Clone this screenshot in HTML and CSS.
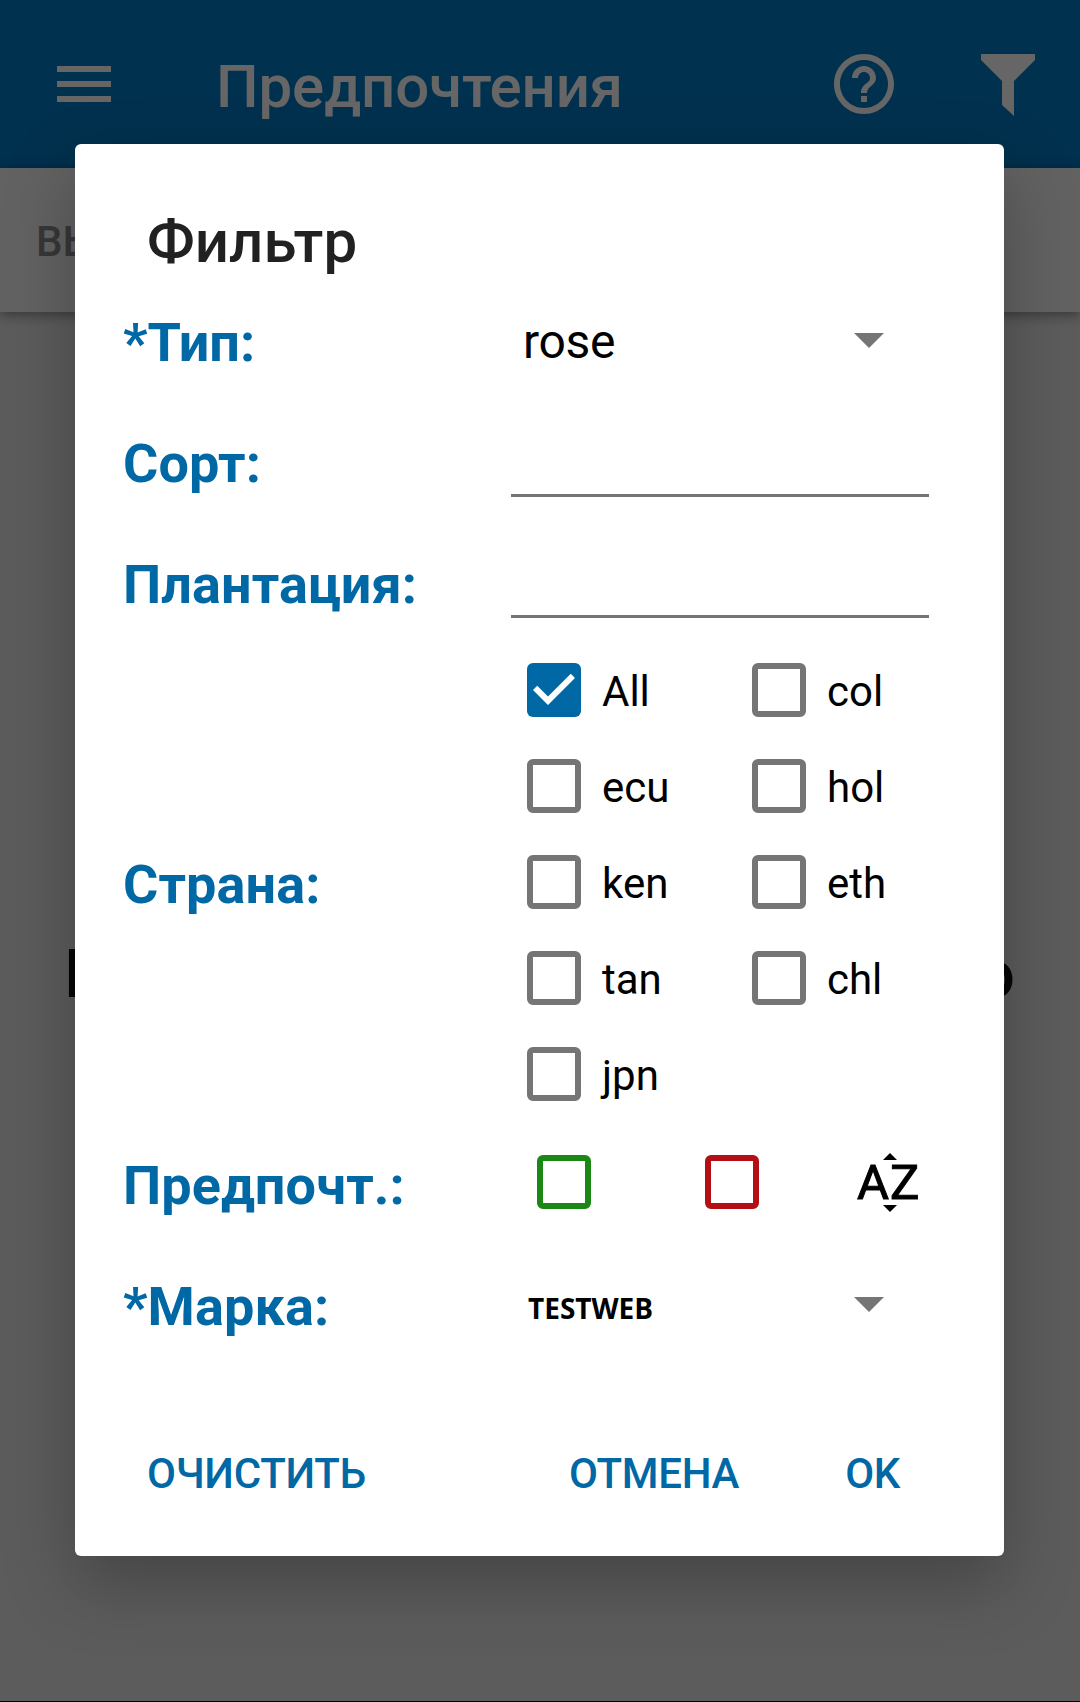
FILE: index.html
```html
<!DOCTYPE html>
<html lang="ru">

<head>
    <meta charset="UTF-8">
    <meta name="viewport" content="width=device-width, initial-scale=1.0">
    <title>Предпочтения</title>
    <link rel="stylesheet" href="styles.css">
</head>

<body>

    <div class="page">
        <header class="header">
            <svg class="menu-icon" viewBox="0 0 24 24"><path d="M3 18h18v-2H3v2zm0-5h18v-2H3v2zm0-7v2h18V6H3z"/></svg>
            <h1>Предпочтения</h1>
            <svg class="help-icon" viewBox="0 0 24 24"><path d="M11 18h2v-2h-2v2zm1-16C6.480 2 2 6.480 2 12s4.480 10 10 10 10-4.480 10-10S17.520 2 12 2zm0 18c-4.410 0-8-3.590-8-8s3.590-8 8-8 8 3.590 8 8-3.590 8-8 8zm0-14c-2.210 0-4 1.790-4 4h2c0-1.100.9-2 2-2s2 .9 2 2c0 2-3 1.750-3 5h2c0-2.250 3-2.500 3-5 0-2.210-1.790-4-4-4z"/></svg>
            <svg class="filter-icon" viewBox="0 0 54 62"><path d="M0 0h54v6L33 27v35L21 51V27L0 6z"/></svg>
        </header>
        <div class="tabs">ВЫ</div>
        <main class="empty">
            <span>П</span>
            <span>о</span>
        </main>
    </div>

    <div class="overlay">
        <form class="dialog">
            <h2>Фильтр</h2>

            <div class="row">
                <span class="label">*Тип:</span>
                <div class="select">
                    <span>rose</span>
                    <i class="arrow"></i>
                </div>
            </div>

            <div class="row">
                <label class="label" for="sort">Сорт:</label>
                <input class="text-input" type="text" id="sort">
            </div>

            <div class="row">
                <label class="label" for="farm">Плантация:</label>
                <input class="text-input" type="text" id="farm">
            </div>

            <div class="row row-country">
                <span class="label">Страна:</span>
                <div class="countries">
                    <label><span class="box checked"><svg viewBox="3 3 18 18"><path d="M10 17l-5-5 1.410-1.410L10 14.170l7.590-7.590L19 8l-9 9z"/></svg></span><span>All</span></label>
                    <label><span class="box"></span><span>col</span></label>
                    <label><span class="box"></span><span>ecu</span></label>
                    <label><span class="box"></span><span>hol</span></label>
                    <label><span class="box"></span><span>ken</span></label>
                    <label><span class="box"></span><span>eth</span></label>
                    <label><span class="box"></span><span>tan</span></label>
                    <label><span class="box"></span><span>chl</span></label>
                    <label><span class="box"></span><span>jpn</span></label>
                </div>
            </div>

            <div class="row">
                <span class="label">Предпочт.:</span>
                <div class="prefs">
                    <span class="box green"></span>
                    <span class="box red"></span>
                    <div class="sort-az">
                        <i class="up"></i>
                        <span>AZ</span>
                        <i class="down"></i>
                    </div>
                </div>
            </div>

            <div class="row">
                <span class="label">*Марка:</span>
                <div class="select select-mark">
                    <span>TESTWEB</span>
                    <i class="arrow"></i>
                </div>
            </div>

            <div class="actions">
                <button type="reset">ОЧИСТИТЬ</button>
                <button type="button" class="cancel">ОТМЕНА</button>
                <button type="button">OK</button>
            </div>
        </form>
    </div>

</body>

</html>
```
FILE: styles.css
```css
* {
    box-sizing: border-box;
}

body {
    margin: 0;
    font-family: Roboto, sans-serif;
    background-color: #e6e6e6;
}

.page {
    height: 1702px;
    display: flex;
    flex-direction: column;
    border-bottom: 1px solid #000;
}

.header {
    height: 168px;
    padding: 0 45px 0 48px;
    display: flex;
    align-items: center;
    background-color: #007ac2;
    color: #fff;
}

.header svg {
    fill: #fff;
}

.header h1 {
    flex: 1;
    margin: 6px 0 0 96px;
    font-size: 60px;
    font-weight: 500;
    line-height: 70px;
    letter-spacing: -0.1px;
}

.menu-icon,
.help-icon {
    width: 72px;
    height: 72px;
}

.filter-icon {
    width: 54px;
    height: 62px;
    margin: 2px 0 0 81px;
}

.tabs {
    height: 144px;
    padding-left: 36px;
    font-size: 42px;
    font-weight: 500;
    line-height: 147px;
    color: #8a8a8a;
    background-color: #f5f5f5;
    box-shadow: 0 3px 12px rgba(0, 0, 0, 0.4);
}

.empty {
    flex: 1;
    display: flex;
    justify-content: space-between;
    padding: 624px 65px 0 64px;
    font-size: 66px;
    font-weight: 500;
    line-height: 78px;
    color: #111;
}

.overlay {
    position: absolute;
    top: 0;
    left: 0;
    width: 1080px;
    height: 1702px;
    padding: 144px 76px 0 75px;
    background-color: rgba(0, 0, 0, 0.6);
}

.dialog {
    height: 1412px;
    padding: 63px 75px 0 48px;
    display: flex;
    flex-direction: column;
    background-color: #fff;
    border-radius: 6px;
    box-shadow: 0 28px 70px rgba(0, 0, 0, 0.26);
}

.dialog h2 {
    margin: 0 0 5px 24px;
    font-size: 60px;
    font-weight: 500;
    line-height: 70px;
    color: #212121;
}

.row {
    height: 121px;
    display: grid;
    grid-template-columns: 388px 418px;
    align-items: center;
}

.row-country {
    height: 480px;
}

.label {
    font-size: 54px;
    font-weight: 700;
    line-height: 64px;
    letter-spacing: 0.1px;
    color: #0068a5;
}

.select {
    height: 121px;
    padding: 0 45px 4px 12px;
    display: flex;
    align-items: center;
    justify-content: space-between;
    font-size: 48px;
    letter-spacing: -0.3px;
    color: #000;
}

.select span {
    padding-top: 2px;
}

.select-mark {
    padding-left: 17px;
}

.select-mark span {
    padding-top: 7px;
    font-family: "Open Sans", sans-serif;
    font-size: 28px;
    font-weight: 700;
    letter-spacing: 0;
}

.arrow {
    border: 15px solid transparent;
    border-top-color: #757575;
    border-bottom: 0;
}

.text-input {
    width: 418px;
    height: 68px;
    align-self: end;
    margin-bottom: 27px;
    padding: 0 12px;
    border: 0;
    border-bottom: 3px solid #757575;
    background: none;
    font-family: inherit;
    font-size: 48px;
}

.countries {
    margin: -3px 0 3px 16px;
    display: grid;
    grid-template-columns: 225px 177px;
    grid-auto-rows: 96px;
}

.countries label {
    display: flex;
    align-items: center;
    gap: 21px;
    font-size: 42px;
    color: #000;
}

.countries label span:last-child {
    padding-top: 3px;
}

.box {
    width: 54px;
    height: 54px;
    flex: none;
    border: 6px solid #757575;
    border-radius: 6px;
}

.box.checked {
    border: 0;
    background-color: #0068a5;
}

.box svg {
    display: block;
    fill: #fff;
}

.green {
    border-color: #1b8714;
}

.red {
    border-color: #b40f14;
}

.prefs {
    display: flex;
    align-items: center;
    padding: 0 0 7px 26px;
}

.prefs .red {
    margin-left: 114px;
}

.sort-az {
    margin-left: 98px;
    display: flex;
    flex-direction: column;
    align-items: center;
    font-size: 49px;
    font-weight: 400;
    line-height: 45px;
    letter-spacing: 1px;
    color: #000;
    -webkit-text-stroke: 1px #000;
}

.sort-az i {
    border: 7px solid transparent;
    margin-left: 3px;
}

.sort-az .up {
    border-top: 0;
    border-bottom-color: #000;
}

.sort-az .down {
    border-bottom: 0;
    border-top-color: #000;
}

.actions {
    display: flex;
    margin: 74px 29px 0 24px;
}

.actions button {
    padding: 0;
    border: 0;
    background: none;
    font-family: inherit;
    font-size: 42px;
    font-weight: 500;
    line-height: 66px;
    letter-spacing: -0.3px;
    color: #0068a5;
}

.actions .cancel {
    margin-left: auto;
    margin-right: 106px;
}
```
